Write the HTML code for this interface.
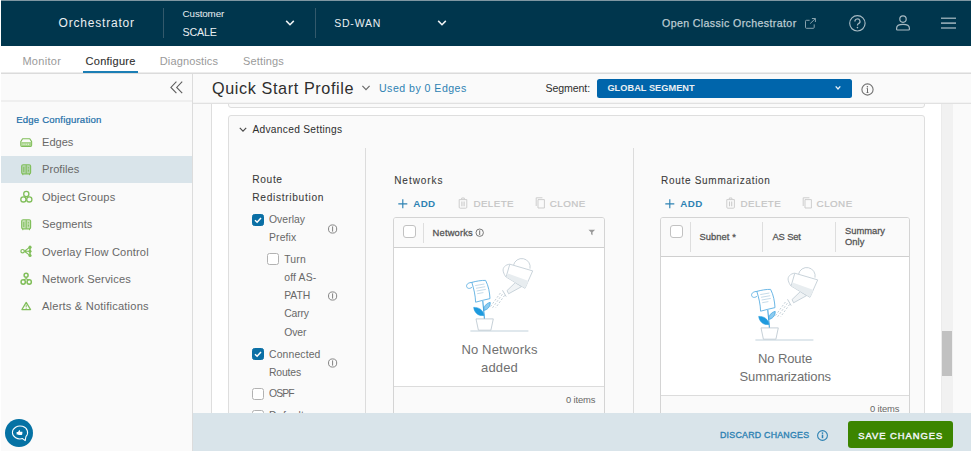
<!DOCTYPE html>
<html lang="en">
<head>
<meta charset="utf-8">
<title>Orchestrator - Quick Start Profile</title>
<style>
html,body{margin:0;padding:0;}
body{width:972px;height:451px;overflow:hidden;background:#fff;position:relative;font-family:"Liberation Sans",sans-serif;}
.a{position:absolute;box-sizing:border-box;}
.t{position:absolute;white-space:nowrap;line-height:1;}
.w{color:#eaeff2;}
.l{color:#9a9a9a;}
.d{color:#2e2e2e;}
.g{color:#686868;}
.g2{color:#555;}
.g3{color:#707070;}
.b{color:#2e82b3;}
.b2{color:#1b6ea8;}
.dis{color:#c4c4c4;}
svg{position:absolute;overflow:visible;}
.cb{position:absolute;box-sizing:border-box;width:12px;height:12px;border:1px solid #b2b2b2;border-radius:2.5px;background:#fff;}
.cb.on{background:#0a6fa5;border-color:#0a6fa5;}
</style>
</head>
<body>
<!-- top edge -->
<div class="a" style="left:1px;top:0;width:970px;height:1px;background:#7f97a2"></div>

<!-- HEADER -->
<header class="a" style="left:1px;top:1px;width:970px;height:45px;background:#00364d">
</header>
<span class="t w" style="left:58.6px;top:17.4px;font-size:12.0px;letter-spacing:0.79px">Orchestrator</span>
<div class="a" style="left:162.5px;top:8px;width:1px;height:30px;background:#33596b"></div>
<span class="t w" style="left:182.6px;top:9.3px;font-size:9.8px;letter-spacing:-0.12px">Customer</span>
<span class="t w" style="left:182.6px;top:27.2px;font-size:10.7px;letter-spacing:-0.22px">SCALE</span>
<svg style="left:285px;top:19px" width="10" height="8" viewBox="0 0 10 8"><path d="M1.2 1.9 L5 5.7 L8.8 1.9" fill="none" stroke="#eef2f4" stroke-width="1.55"/></svg>
<div class="a" style="left:314.5px;top:8px;width:1px;height:30px;background:#33596b"></div>
<span class="t w" style="left:334.2px;top:18.0px;font-size:10.5px;letter-spacing:0.80px">SD-WAN</span>
<svg style="left:436.5px;top:19px" width="10" height="8" viewBox="0 0 10 8"><path d="M1.2 1.9 L5 5.7 L8.8 1.9" fill="none" stroke="#eef2f4" stroke-width="1.55"/></svg>
<span class="t w" style="left:662.0px;top:18.0px;font-size:10.6px;letter-spacing:0.39px;-webkit-text-stroke:0.25px #bccbd2;color:#bccbd2">Open Classic Orchestrator</span>
<!-- header icons: pop-out, help, user, menu -->
<svg style="left:796px;top:0" width="176" height="46" viewBox="796 0 176 46" fill="none" stroke-linejoin="round">
<path d="M814.2 24.4 V27.4 a0.9 0.9 0 0 1 -0.9 0.9 H806.4 a0.9 0.9 0 0 1 -0.9 -0.9 V21.2 a0.9 0.9 0 0 1 0.9 -0.9 H809.6" stroke="#88a2ad" stroke-width="1"/>
<path d="M810.2 23.6 L815.3 18.6 M811.9 18.5 H815.4 V22" stroke="#88a2ad" stroke-width="1"/>
<circle cx="857.4" cy="23.3" r="7.7" stroke="#a7bac3" stroke-width="1.15"/>
<path d="M854.9 21.4 a2.55 2.45 0 1 1 3.7 2.2 c-0.85 0.5 -1.15 0.95 -1.15 1.9" stroke="#a7bac3" stroke-width="1.2"/>
<circle cx="857.45" cy="27.6" r="0.8" fill="#a7bac3"/>
<circle cx="903" cy="19.1" r="3.2" stroke="#a7bac3" stroke-width="1.2"/>
<path d="M896.6 29.2 V28.2 C896.6 25.7 899.2 24.4 903 24.4 C906.8 24.4 909.4 25.7 909.4 28.2 V29.2 a0.8 0.8 0 0 1 -0.8 0.8 H897.4 a0.8 0.8 0 0 1 -0.8 -0.8 Z" stroke="#a7bac3" stroke-width="1.2"/>
<path d="M941 18.2 H956 M941 23.1 H956 M941 28.05 H956" stroke="#8aa3ae" stroke-width="1.6"/>
</svg>

<!-- SUBNAV -->
<nav class="a" style="left:1px;top:46px;width:970px;height:28px;background:#fff;border-bottom:1px solid #dbdbdb"></nav>
<div class="a" style="left:1px;top:72px;width:970px;height:1px;background:#ececec"></div>
<span class="t l" style="left:22.4px;top:55.5px;font-size:11px;letter-spacing:0.29px">Monitor</span>
<span class="t d" style="left:85.6px;top:55.5px;font-size:11px;letter-spacing:0.26px;-webkit-text-stroke:0.12px #333;color:#303030">Configure</span>
<div class="a" style="left:83px;top:71px;width:55px;height:2px;background:#1b7eb5"></div>
<span class="t l" style="left:159.8px;top:55.5px;font-size:11px;letter-spacing:0.13px">Diagnostics</span>
<span class="t l" style="left:243.0px;top:55.5px;font-size:11px;letter-spacing:0.15px">Settings</span>

<!-- SIDEBAR -->
<aside class="a" style="left:1px;top:74px;width:192px;height:377px;background:#fafafa;border-right:1px solid #dcdcdc"></aside>
<div class="a" style="left:1px;top:100px;width:191px;height:2px;background:#efefef"></div>
<svg style="left:170px;top:81px" width="13" height="13" viewBox="0 0 13 13"><path d="M6.4 0.6 L0.9 6.4 L6.4 12.2 M12.2 0.6 L6.7 6.4 L12.2 12.2" fill="none" stroke="#5e5e5e" stroke-width="1.1"/></svg>
<span class="t b2" style="left:16.2px;top:114.5px;font-size:9.6px;letter-spacing:0.18px;-webkit-text-stroke:0.2px #1b6ea8">Edge Configuration</span>
<div class="a" style="left:1px;top:156px;width:191px;height:27px;background:#d9e4ea"></div>
<span class="t g" style="left:42.0px;top:137.2px;font-size:11.1px;letter-spacing:-0.02px">Edges</span>
<span class="t g" style="left:42.0px;top:164.4px;font-size:11.1px;letter-spacing:0.03px">Profiles</span>
<span class="t g" style="left:42.0px;top:191.5px;font-size:11.1px;letter-spacing:0.14px">Object Groups</span>
<span class="t g" style="left:42.0px;top:219.4px;font-size:11.1px;letter-spacing:0.06px">Segments</span>
<span class="t g" style="left:42.0px;top:246.5px;font-size:11.1px;letter-spacing:0.16px">Overlay Flow Control</span>
<span class="t g" style="left:42.0px;top:273.6px;font-size:11.1px;letter-spacing:0.17px">Network Services</span>
<span class="t g" style="left:42.0px;top:300.8px;font-size:11.1px;letter-spacing:0.20px">Alerts &amp; Notifications</span>
<!-- sidebar icons -->
<svg style="left:0;top:0" width="60" height="451" viewBox="0 0 60 451" fill="none" stroke="#80be5a" stroke-width="1.15" stroke-linejoin="round">
<!-- edges -->
<path d="M22.6 138.7 H29.8 L31.6 141.6 V145.3 a1 1 0 0 1 -1 1 H21.8 a1 1 0 0 1 -1 -1 V141.6 Z"/>
<path d="M21.2 142 H31.2 V146 H21.2 Z" fill="#a9d48c" stroke="none"/>
<path d="M22.6 144.2 H29.8" stroke="#eef7e8" stroke-width="1.1" stroke-dasharray="1 0.8"/>
<!-- profiles -->
<rect x="21.7" y="164.7" width="8.9" height="9.2" rx="1.4"/>
<path d="M26.2 165 V173.6 M23.8 167 V172 M28.4 167.2 V168.4 M28.4 169.6 V171.6 M22.8 174 V175.2 M29.5 174 V175.2" stroke-width="1"/>
<rect x="22.2" y="165.2" width="7.9" height="8.2" fill="#80be5a" fill-opacity="0.45" stroke="none"/>
<!-- object groups -->
<circle cx="26.3" cy="194" r="2.6" stroke-width="1.3"/><circle cx="23.4" cy="199.4" r="2.6" stroke-width="1.3"/><circle cx="29.3" cy="199.4" r="2.6" stroke-width="1.3"/>
<!-- segments -->
<rect x="21.7" y="219.7" width="8.9" height="9.2" rx="1.4"/>
<path d="M26.2 220 V228.6 M23.8 222 V227 M28.4 222.2 V223.4 M28.4 224.6 V226.6 M22.8 229 V230.2 M29.5 229 V230.2" stroke-width="1"/>
<rect x="22.2" y="220.2" width="7.9" height="8.2" fill="#80be5a" fill-opacity="0.45" stroke="none"/>
<!-- overlay flow control -->
<circle cx="22.6" cy="251.2" r="1.7" stroke-width="1.2"/>
<path d="M24.4 251.2 L29.2 247.6 M24.4 251.2 H29 M24.4 251.2 L29.2 254.9" stroke-width="1.1"/><path d="M30 247.2 V255.5" stroke-width="1.5"/>
<circle cx="30" cy="247.2" r="1.6" fill="#80be5a" stroke="none"/><circle cx="30" cy="251.3" r="1.5" fill="#80be5a" stroke="none"/><circle cx="30" cy="255.5" r="1.6" fill="#80be5a" stroke="none"/>
<!-- network services -->
<circle cx="26.1" cy="275.3" r="2" stroke-width="1.5"/><circle cx="23.2" cy="282" r="2.15" stroke-width="1.5"/><circle cx="29.2" cy="282" r="2.15" stroke-width="1.5"/>
<path d="M26.1 277.3 V278.8 L23.6 280 M26.1 278.8 L28.8 280" stroke-width="1.1"/>
<!-- alerts -->
<path d="M26.2 302.4 L30.6 309.6 H21.9 Z" stroke-width="1.2"/>
<path d="M26.2 304.6 V307.4 M26.2 308.1 V308.9" stroke-width="1"/>
</svg>
<!-- chat bubble -->
<div class="a" style="left:5.2px;top:419.2px;width:27.8px;height:27.8px;border-radius:50%;background:#0572a4"></div>
<svg style="left:5px;top:419px" width="28" height="28" viewBox="5 419 28 28" fill="none">
<path d="M22.6 438.6 A7.6 6.5 0 1 1 25.9 436.6 L25.2 440.6 Z" stroke="#fff" stroke-width="1.05" stroke-linejoin="round"/>
<path d="M16.6 432 H18 L19.3 429.9 C20 429.9 20.2 430.6 19.9 431.7 H21.9 C22.5 431.7 22.6 432.4 22.3 432.6 C22.6 433 22.5 433.5 22.2 433.7 C22.4 434.2 22.2 434.7 21.7 434.9 H18.6 L18 434.5 H16.6 Z" fill="#fff"/>
</svg>

<!-- CONTENT HEADER -->
<div class="a" style="left:193px;top:74px;width:778px;height:29px;background:#fafafa;border-bottom:1px solid #f3f3f3"></div>
<span class="t d" style="left:212.0px;top:80.0px;font-size:16.2px;letter-spacing:0.61px">Quick Start Profile</span>
<svg style="left:361px;top:84px" width="10" height="8" viewBox="0 0 10 8"><path d="M1.4 1.9 L5 5.6 L8.6 1.9" fill="none" stroke="#6a6a6a" stroke-width="1.2"/></svg>
<span class="t b" style="left:379.0px;top:83.2px;font-size:10.6px;letter-spacing:0.47px">Used by 0 Edges</span>
<span class="t d" style="left:545.4px;top:83.2px;font-size:10.6px;letter-spacing:-0.08px">Segment:</span>
<div class="a" style="left:597px;top:79px;width:255px;height:18.5px;background:#0065ab;border-radius:2.5px"></div>
<span class="t w" style="left:607.4px;top:84.3px;font-size:9.2px;letter-spacing:0.05px;font-weight:700">GLOBAL SEGMENT</span>
<svg style="left:835px;top:85px" width="7" height="6" viewBox="0 0 7 6"><path d="M0.7 1.4 L3 3.9 L5.3 1.4" fill="none" stroke="#e8f1f8" stroke-width="1.35"/></svg>
<svg style="left:861px;top:82.5px" width="13" height="13" viewBox="0 0 13 13"><circle cx="6.5" cy="6.5" r="5.6" fill="none" stroke="#737373" stroke-width="1.1"/><path d="M6.5 5.4 V9.4 M5.6 9.5 H7.4 M5.7 5.5 H6.5" stroke="#6a6a6a" stroke-width="1" fill="none"/><circle cx="6.4" cy="3.7" r="0.75" fill="#6a6a6a"/></svg>

<!-- CONTENT AREA -->
<main class="a" style="left:193px;top:103px;width:778px;height:310px;background:#fafafa;overflow:hidden">
  <div class="a" style="left:18px;top:0;width:730px;height:310px;background:#fff;border-left:1px solid #dedede"></div>
  <!-- scrollbar -->
  <div class="a" style="left:748px;top:0;width:12px;height:310px;background:#f1f1f1;border-left:1px solid #ebebeb"></div>
  <div class="a" style="left:749px;top:227.5px;width:10px;height:45.5px;background:#c1c1c1"></div>
  <!-- previous card bottom -->
  <div class="a" style="left:35px;top:-10px;width:697px;height:15px;background:#fafafa;border:1px solid #dedede;border-radius:3px"></div>
  <!-- advanced settings card -->
  <section class="a" style="left:35px;top:12px;width:697px;height:320px;background:#fafafa;border:1px solid #dedede;border-radius:3px"></section>
  <div class="a" style="left:172px;top:45px;width:1px;height:270px;background:#dcdcdc"></div>
  <div class="a" style="left:440px;top:45px;width:1px;height:270px;background:#dcdcdc"></div>
  <div class="a" style="left:0;top:0;width:778px;height:1px;background:#e1e1e1"></div>
</main>
<svg style="left:238.5px;top:126px" width="8" height="7" viewBox="0 0 8 7"><path d="M0.8 1.8 L4 5.2 L7.2 1.8" fill="none" stroke="#4a4a4a" stroke-width="1.15"/></svg>
<span class="t d" style="left:252.4px;top:124.6px;font-size:10.2px;letter-spacing:0.30px">Advanced Settings</span>
<span class="t d" style="left:252.3px;top:174.8px;font-size:10.2px;letter-spacing:0.63px;color:#3a3a3a;-webkit-text-stroke:0.08px #3a3a3a">Route</span>
<span class="t d" style="left:252.3px;top:193.0px;font-size:10.2px;letter-spacing:0.68px;color:#3a3a3a;-webkit-text-stroke:0.08px #3a3a3a">Redistribution</span>

<!-- checkbox list -->
<div class="cb on" style="left:252px;top:213.7px"></div>
<svg style="left:252px;top:213.7px" width="12" height="12" viewBox="0 0 12 12"><path d="M3 6.2 L5.1 8.2 L9 3.9" fill="none" stroke="#fff" stroke-width="1.5"/></svg>
<span class="t g" style="left:269.0px;top:215.0px;font-size:10.4px;letter-spacing:0.03px">Overlay</span>
<span class="t g" style="left:269.0px;top:233.2px;font-size:10.4px;letter-spacing:0.13px">Prefix</span>
<div class="cb" style="left:267.2px;top:253.4px"></div>
<span class="t g" style="left:284.2px;top:254.6px;font-size:10.4px;letter-spacing:0.21px">Turn</span>
<span class="t g" style="left:284.2px;top:273.0px;font-size:10.4px;letter-spacing:0.17px">off AS-</span>
<span class="t g" style="left:284.2px;top:291.2px;font-size:10.4px;letter-spacing:-0.06px">PATH</span>
<span class="t g" style="left:284.2px;top:309.4px;font-size:10.4px;letter-spacing:-0.15px">Carry</span>
<span class="t g" style="left:284.2px;top:327.6px;font-size:10.4px;letter-spacing:-0.11px">Over</span>
<div class="cb on" style="left:252px;top:348.3px"></div>
<svg style="left:252px;top:348.3px" width="12" height="12" viewBox="0 0 12 12"><path d="M3 6.2 L5.1 8.2 L9 3.9" fill="none" stroke="#fff" stroke-width="1.5"/></svg>
<span class="t g" style="left:269.0px;top:349.6px;font-size:10.4px;letter-spacing:0.14px">Connected</span>
<span class="t g" style="left:269.0px;top:367.6px;font-size:10.4px;letter-spacing:-0.15px">Routes</span>
<div class="cb" style="left:252px;top:388.2px"></div>
<span class="t g" style="left:269.0px;top:389.2px;font-size:10.4px;letter-spacing:-0.90px">OSPF</span>
<div class="cb" style="left:252px;top:410.2px"></div>
<span class="t g" style="left:269.0px;top:411.0px;font-size:10.4px;letter-spacing:0.34px">Default</span>
<!-- info icons col 1 -->
<svg style="left:328px;top:224px" width="10" height="10" viewBox="0.4 0 10 10"><circle cx="5" cy="5" r="4.1" fill="none" stroke="#808080" stroke-width="0.95"/><path d="M5 2.4 V7.6" stroke="#808080" stroke-width="1"/></svg>
<svg style="left:328px;top:291px" width="10" height="10" viewBox="0.4 0 10 10"><circle cx="5" cy="5" r="4.1" fill="none" stroke="#808080" stroke-width="0.95"/><path d="M5 2.4 V7.6" stroke="#808080" stroke-width="1"/></svg>
<svg style="left:328px;top:358px" width="10" height="10" viewBox="0.4 0 10 10"><circle cx="5" cy="5" r="4.1" fill="none" stroke="#808080" stroke-width="0.95"/><path d="M5 2.4 V7.6" stroke="#808080" stroke-width="1"/></svg>

<!-- NETWORKS column -->
<span class="t d" style="left:394.2px;top:176.2px;font-size:10.0px;letter-spacing:0.96px;color:#3a3a3a;-webkit-text-stroke:0.08px #3a3a3a">Networks</span>
<svg style="left:397.9px;top:198.6px" width="10" height="10" viewBox="0 0 10 10"><path d="M4.8 0.3 V9.3 M0.3 4.8 H9.3" stroke="#2e82b3" stroke-width="1.15"/></svg>
<span class="t b" style="left:413.2px;top:199.0px;font-size:9.8px;letter-spacing:0.38px;font-weight:700">ADD</span>
<svg style="left:458px;top:197.4px" width="10" height="12" viewBox="0 0 10 12"><path d="M1.2 2.6 H8.8 V10.2 a1 1 0 0 1 -1 1 H2.2 a1 1 0 0 1 -1 -1 Z M3.7 2.4 V1 H6.3 V2.4" fill="none" stroke="#cbcbcb" stroke-width="0.95" stroke-linejoin="round"/><path d="M3.9 4.6 V9.2 M6.1 4.6 V9.2" stroke="#cbcbcb" stroke-width="1.1"/></svg>
<span class="t dis" style="left:473.4px;top:199.0px;font-size:9.8px;letter-spacing:0.42px;-webkit-text-stroke:0.2px #c4c4c4">DELETE</span>
<svg style="left:535px;top:197.4px" width="11" height="12" viewBox="0 0 11 12"><path d="M3 2.6 H9.4 V11 H3 Z M1.2 9 V0.8 H7.4" fill="none" stroke="#cbcbcb" stroke-width="0.95" stroke-linejoin="round"/></svg>
<span class="t dis" style="left:549.8px;top:199.0px;font-size:9.8px;letter-spacing:0.46px;-webkit-text-stroke:0.2px #c4c4c4">CLONE</span>
<div class="a" style="left:393px;top:217px;width:212px;height:200px;background:#fff;border:1px solid #d4d4d4;border-radius:3px 3px 0 0"></div>
<div class="a" style="left:394px;top:218px;width:210px;height:30px;background:#fafafa;border-bottom:1px solid #cfcfcf;border-radius:2px 2px 0 0"></div>
<div class="cb" style="left:403px;top:225px;width:13px;height:13px;border-color:#c2c2c2;border-radius:3px"></div>
<div class="a" style="left:423.2px;top:222.5px;width:1px;height:20px;background:#dedede"></div>
<span class="t g2" style="left:432.6px;top:227.7px;font-size:9.4px;letter-spacing:0.16px;-webkit-text-stroke:0.28px #555">Networks</span>
<svg style="left:475px;top:228px" width="9" height="9" viewBox="-0.2 -0.2 9 9"><circle cx="4.5" cy="4.5" r="3.7" fill="none" stroke="#6a6a6a" stroke-width="0.9"/><path d="M4.5 2.2 V6.8" stroke="#6a6a6a" stroke-width="0.95"/></svg>
<svg style="left:587.8px;top:229.4px" width="7.6" height="6.8" viewBox="0 0 7 6"><path d="M0.4 0.5 H6.6 L4.2 2.9 V5.6 L2.8 4.8 V2.9 Z" fill="#9a9a9a"/></svg>
<div class="a" style="left:394px;top:386px;width:210px;height:30px;background:#fafafa;border-top:1px solid #dcdcdc"></div>
<span class="t g3" style="left:461.4px;top:343.3px;font-size:13px;letter-spacing:0.16px">No Networks</span>
<span class="t g3" style="left:481.0px;top:361.3px;font-size:13px;letter-spacing:0.16px">added</span>
<span class="t g" style="left:566.0px;top:395.2px;font-size:9.4px;letter-spacing:-0.14px">0 items</span>
<svg style="left:456px;top:250px" width="90" height="90" viewBox="0 0 90 90">
<path d="M14.4 81 H72.4" stroke="#e0e8ed" stroke-width="2" fill="none"/>
<path d="M26.8 51 C27.2 57 28.2 63 28.4 69" stroke="#46a6e0" stroke-width="1.1" fill="none"/>
<path d="M20 68.9 H37.3 L34.9 80.2 H22.4 Z" fill="#fff" stroke="#c0cbd2" stroke-width="0.9" stroke-linejoin="round"/>
<path d="M27.9 65.4 C22 66.4 18.4 62.4 17.7 57.4 C22.6 57.2 27.4 60 27.9 65.4 Z" fill="#1e9ade" stroke="#1e9ade" stroke-width="0.6"/>
<path d="M27.6 60.4 C27.8 56.2 30.4 53.2 34.2 52.4 C34.4 56.6 31.6 59.8 27.6 60.4 Z" fill="#8ccbf0" stroke="#3fa3df" stroke-width="0.8"/>
<path d="M15.8 32.4 C20 31.2 25.5 30.2 29.6 30.4 C32.6 36 33.6 42.5 34 48.6 C29.5 49.4 24.5 51 19.6 52.2 C19.4 45.5 17.8 38.5 15.8 32.4 Z" fill="#fff" stroke="#6bb7e6" stroke-width="1" stroke-linejoin="round"/>
<path d="M16 32.4 C12.6 32.4 10.2 34.2 10.6 36.4 C11 38.6 13.6 39.2 15.8 37.4" fill="none" stroke="#6bb7e6" stroke-width="1" stroke-linecap="round"/>
<path d="M19.2 35.6 L28.4 34 M20 38.3 L29.2 36.7 M20.6 41 L29.8 39.4 M21.2 43.7 L27.4 42.6" stroke="#b7d2e3" stroke-width="0.8" fill="none"/>
<path d="M46.4 44.2 L36.4 58 M48.6 45.4 L39.6 57.8 M44.4 43 L33.6 57.8" stroke="#bccad3" stroke-width="0.9" stroke-dasharray="2 1.7" fill="none"/>
<path d="M57.5 15.3 A8.3 8.3 0 0 1 74 18.6" fill="none" stroke="#c3ced6" stroke-width="0.9"/>
<path d="M59.3 32.6 L51 40.6 L52.6 43.8 L65.6 36.6 Z" fill="#f1f4f6" stroke="#c3ced6" stroke-width="0.9" stroke-linejoin="round"/>
<path d="M46.5 40.3 L50.2 46.6" stroke="#c3ced6" stroke-width="1" fill="none"/>
<path d="M53.8 14.2 C49.5 14.6 46.4 17.6 47.2 21.2 C47.8 23.8 49 25.8 50.1 27" fill="#fff" stroke="#c3ced6" stroke-width="0.9"/>
<path d="M53.8 14.2 L76.7 20.9 L69 38.3 L50.1 27 Z" fill="#fff" stroke="#c3ced6" stroke-width="0.9" stroke-linejoin="round"/>
<path d="M51.6 23.4 L72.6 31 L69 38 L50.5 27 Z" fill="#e8edf0"/>
</svg>

<!-- ROUTE SUMMARIZATION column -->
<span class="t d" style="left:661.0px;top:176.2px;font-size:10.0px;letter-spacing:0.71px;color:#3a3a3a;-webkit-text-stroke:0.08px #3a3a3a">Route Summarization</span>
<svg style="left:665.1px;top:198.6px" width="10" height="10" viewBox="0 0 10 10"><path d="M4.8 0.3 V9.3 M0.3 4.8 H9.3" stroke="#2e82b3" stroke-width="1.15"/></svg>
<span class="t b" style="left:680.2px;top:199.0px;font-size:9.8px;letter-spacing:0.48px;font-weight:700">ADD</span>
<svg style="left:725px;top:197.4px" width="10" height="12" viewBox="-0.6 0 10 12"><path d="M1.2 2.6 H8.8 V10.2 a1 1 0 0 1 -1 1 H2.2 a1 1 0 0 1 -1 -1 Z M3.7 2.4 V1 H6.3 V2.4" fill="none" stroke="#cbcbcb" stroke-width="0.95" stroke-linejoin="round"/><path d="M3.9 4.6 V9.2 M6.1 4.6 V9.2" stroke="#cbcbcb" stroke-width="1.1"/></svg>
<span class="t dis" style="left:740.6px;top:199.0px;font-size:9.8px;letter-spacing:0.41px;-webkit-text-stroke:0.2px #c4c4c4">DELETE</span>
<svg style="left:802px;top:197.4px" width="11" height="12" viewBox="0 0 11 12"><path d="M3 2.6 H9.4 V11 H3 Z M1.2 9 V0.8 H7.4" fill="none" stroke="#cbcbcb" stroke-width="0.95" stroke-linejoin="round"/></svg>
<span class="t dis" style="left:816.6px;top:199.0px;font-size:9.8px;letter-spacing:0.46px;-webkit-text-stroke:0.2px #c4c4c4">CLONE</span>
<div class="a" style="left:660px;top:217px;width:249.5px;height:200px;background:#fff;border:1px solid #d4d4d4;border-radius:3px 3px 0 0"></div>
<div class="a" style="left:661px;top:218px;width:247.5px;height:39px;background:#fafafa;border-bottom:1px solid #cfcfcf;border-radius:2px 2px 0 0"></div>
<div class="cb" style="left:670px;top:225px;width:13px;height:13px;border-color:#c2c2c2;border-radius:3px"></div>
<div class="a" style="left:690.2px;top:222px;width:1px;height:29.5px;background:#dedede"></div>
<div class="a" style="left:762.4px;top:222px;width:1px;height:29.5px;background:#dedede"></div>
<div class="a" style="left:835px;top:222px;width:1px;height:29.5px;background:#dedede"></div>
<span class="t g2" style="left:699.4px;top:232.2px;font-size:9.4px;letter-spacing:0.06px;-webkit-text-stroke:0.28px #555">Subnet *</span>
<span class="t g2" style="left:772.4px;top:232.2px;font-size:9.4px;letter-spacing:-0.12px;-webkit-text-stroke:0.28px #555">AS Set</span>
<span class="t g2" style="left:845.0px;top:226.4px;font-size:9.4px;letter-spacing:-0.02px;-webkit-text-stroke:0.28px #555">Summary</span>
<span class="t g2" style="left:845.0px;top:237.4px;font-size:9.4px;letter-spacing:0.04px;-webkit-text-stroke:0.28px #555">Only</span>
<div class="a" style="left:661px;top:395px;width:247.5px;height:22px;background:#fafafa;border-top:1px solid #dcdcdc"></div>
<span class="t g3" style="left:758.0px;top:352.0px;font-size:13px;letter-spacing:-0.10px">No Route</span>
<span class="t g3" style="left:739.6px;top:370.1px;font-size:13px;letter-spacing:-0.14px">Summarizations</span>
<span class="t g" style="left:870.0px;top:404.4px;font-size:9.4px;letter-spacing:-0.14px">0 items</span>
<svg style="left:741px;top:258.8px" width="90" height="90" viewBox="0 0 90 90">
<path d="M14.4 81 H72.4" stroke="#e0e8ed" stroke-width="2" fill="none"/>
<path d="M26.8 51 C27.2 57 28.2 63 28.4 69" stroke="#46a6e0" stroke-width="1.1" fill="none"/>
<path d="M20 68.9 H37.3 L34.9 80.2 H22.4 Z" fill="#fff" stroke="#c0cbd2" stroke-width="0.9" stroke-linejoin="round"/>
<path d="M27.9 65.4 C22 66.4 18.4 62.4 17.7 57.4 C22.6 57.2 27.4 60 27.9 65.4 Z" fill="#1e9ade" stroke="#1e9ade" stroke-width="0.6"/>
<path d="M27.6 60.4 C27.8 56.2 30.4 53.2 34.2 52.4 C34.4 56.6 31.6 59.8 27.6 60.4 Z" fill="#8ccbf0" stroke="#3fa3df" stroke-width="0.8"/>
<path d="M15.8 32.4 C20 31.2 25.5 30.2 29.6 30.4 C32.6 36 33.6 42.5 34 48.6 C29.5 49.4 24.5 51 19.6 52.2 C19.4 45.5 17.8 38.5 15.8 32.4 Z" fill="#fff" stroke="#6bb7e6" stroke-width="1" stroke-linejoin="round"/>
<path d="M16 32.4 C12.6 32.4 10.2 34.2 10.6 36.4 C11 38.6 13.6 39.2 15.8 37.4" fill="none" stroke="#6bb7e6" stroke-width="1" stroke-linecap="round"/>
<path d="M19.2 35.6 L28.4 34 M20 38.3 L29.2 36.7 M20.6 41 L29.8 39.4 M21.2 43.7 L27.4 42.6" stroke="#b7d2e3" stroke-width="0.8" fill="none"/>
<path d="M46.4 44.2 L36.4 58 M48.6 45.4 L39.6 57.8 M44.4 43 L33.6 57.8" stroke="#bccad3" stroke-width="0.9" stroke-dasharray="2 1.7" fill="none"/>
<path d="M57.5 15.3 A8.3 8.3 0 0 1 74 18.6" fill="none" stroke="#c3ced6" stroke-width="0.9"/>
<path d="M59.3 32.6 L51 40.6 L52.6 43.8 L65.6 36.6 Z" fill="#f1f4f6" stroke="#c3ced6" stroke-width="0.9" stroke-linejoin="round"/>
<path d="M46.5 40.3 L50.2 46.6" stroke="#c3ced6" stroke-width="1" fill="none"/>
<path d="M53.8 14.2 C49.5 14.6 46.4 17.6 47.2 21.2 C47.8 23.8 49 25.8 50.1 27" fill="#fff" stroke="#c3ced6" stroke-width="0.9"/>
<path d="M53.8 14.2 L76.7 20.9 L69 38.3 L50.1 27 Z" fill="#fff" stroke="#c3ced6" stroke-width="0.9" stroke-linejoin="round"/>
<path d="M51.6 23.4 L72.6 31 L69 38 L50.5 27 Z" fill="#e8edf0"/>
</svg>

<!-- FOOTER BAR -->
<footer class="a" style="left:193px;top:413.4px;width:778px;height:38px;background:#d9e4ea"></footer>
<span class="t b" style="left:720.0px;top:431.0px;font-size:8.8px;letter-spacing:0.25px;-webkit-text-stroke:0.35px #2e82b3">DISCARD CHANGES</span>
<svg style="left:815.6px;top:428.8px" width="13" height="13" viewBox="0 0 13 13"><circle cx="6.5" cy="6.5" r="4.9" fill="none" stroke="#2e82b3" stroke-width="1.1"/><path d="M6.5 5.6 V9.2" stroke="#2e82b3" stroke-width="1.5"/><circle cx="6.5" cy="4.1" r="0.85" fill="#2e82b3"/></svg>
<div class="a" style="left:848.4px;top:420.8px;width:104.6px;height:27.5px;background:#3c8500;border-radius:3px"></div>
<span class="t w" style="left:858.2px;top:430.7px;font-size:9.4px;letter-spacing:0.99px;-webkit-text-stroke:0.45px #f4f7f8">SAVE CHANGES</span>
</body>
</html>
